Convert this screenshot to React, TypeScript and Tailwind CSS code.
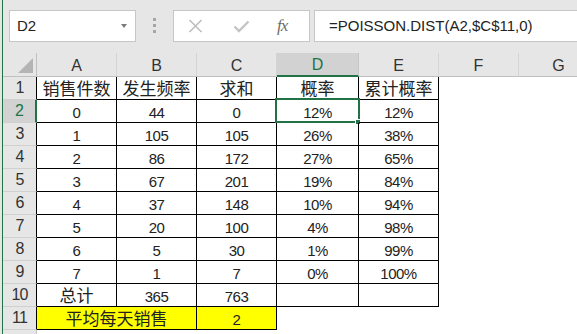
import React from 'react';

const GREEN = '#217346';

const cols = ['A', 'B', 'C', 'D', 'E', 'F', 'G'];

const rows: string[][] = [
  ['销售件数', '发生频率', '求和', '概率', '累计概率'],
  ['0', '44', '0', '12%', '12%'],
  ['1', '105', '105', '26%', '38%'],
  ['2', '86', '172', '27%', '65%'],
  ['3', '67', '201', '19%', '84%'],
  ['4', '37', '148', '10%', '94%'],
  ['5', '20', '100', '4%', '98%'],
  ['6', '5', '30', '1%', '99%'],
  ['7', '1', '7', '0%', '100%'],
  ['总计', '365', '763', '', ''],
];

const isCJK = (s: string) => /[\u4e00-\u9fff]/.test(s);

const CellText: React.FC<{ value: string }> = ({ value }) =>
  isCJK(value) ? (
    <span className="text-[17px] leading-[20px] pt-[3px]">{value}</span>
  ) : (
    <span className="text-[15px] leading-[18px] tracking-[-0.5px] pt-[4px]">{value}</span>
  );

const RowHeader: React.FC<{ n?: number; active?: boolean; dark?: boolean }> = ({ n, active, dark }) => (
  <div
    className={`flex items-center justify-center border-b border-[#d0d0d0] text-[16px] tracking-[-0.8px] ${
      active
        ? 'bg-[#d2d2d2] border-r-2 border-r-[#217346] text-[#217346]'
        : `bg-[#e6e6e6] border-r ${dark ? 'border-r-black' : 'border-r-[#c6c6c6]'} text-[#333]`
    }`}
  >
    {n}
  </div>
);

export default function App() {
  return (
    <div className="w-[577px] h-[334px] overflow-hidden bg-[#e6e6e6] pl-[2px] font-['Liberation_Sans','Noto_Sans_CJK_SC',sans-serif] text-[#222]">
      <div className="h-full border-l border-[#217346] flex flex-col">
        {/* formula bar */}
        <div className="h-[53px] shrink-0 flex items-start pt-[10px] bg-[#e6e6e6]">
          <div className="ml-[6px] w-[127px] h-[32px] bg-white border border-[#c6c6c6] flex items-center pl-[7px] pr-[8px] justify-between">
            <span className="text-[15px]">D2</span>
            <span className="w-0 h-0 border-l-[3.5px] border-r-[3.5px] border-t-[4px] border-l-transparent border-r-transparent border-t-[#7a7a7a]" />
          </div>
          <div className="ml-[17px] mt-[8px] flex flex-col gap-[3px]">
            <span className="w-[3px] h-[3px] bg-[#a6a6a6]" />
            <span className="w-[3px] h-[3px] bg-[#a6a6a6]" />
            <span className="w-[3px] h-[3px] bg-[#a6a6a6]" />
          </div>
          <div className="ml-[17px] w-[137px] h-[32px] bg-white border border-[#c6c6c6] flex items-center pl-[14px]">
            <svg width="15" height="14" viewBox="0 0 15 14">
              <path d="M1.5 1 L13.5 13 M13.5 1 L1.5 13" stroke="#bdbdbd" strokeWidth="1.6" fill="none" />
            </svg>
            <svg className="ml-[30px]" width="17" height="13" viewBox="0 0 17 13">
              <path d="M1.5 6.5 L6 11 L15.5 1.5" stroke="#c4c4c4" strokeWidth="2.4" fill="none" />
            </svg>
            <span className="ml-[27px] font-['Liberation_Serif',serif] italic text-[17px] text-[#6d6d6d] tracking-[-1px]">
              fx
            </span>
          </div>
          <div className="ml-[4px] flex-1 h-[32px] bg-white border border-r-0 border-[#c6c6c6] flex items-center pl-[14px]">
            <span className="text-[15px] text-[#222]">=POISSON.DIST(A2,$C$11,0)</span>
          </div>
        </div>

        {/* sheet grid */}
        <div className="flex-1 bg-white grid grid-cols-[34px_80px_80px_80px_82px_80px_80px_80px] grid-rows-[24px_repeat(12,23px)]">
          {/* column headers */}
          <div className="bg-[#e6e6e6] border-r border-b border-[#bfbfbf] relative">
            <svg className="absolute left-[15px] top-[5px]" width="16" height="16" viewBox="0 0 16 16">
              <path d="M15 0 L15 15 L0 15 Z" fill="#b4b4b4" />
            </svg>
          </div>
          {cols.map((c) =>
            c === 'D' ? (
              <div
                key={c}
                className="bg-[#d2d2d2] border-r border-r-[#c6c6c6] border-b-2 border-b-[#217346] flex items-center justify-center text-[16px] text-[#217346] pt-[2px]"
              >
                {c}
              </div>
            ) : (
              <div
                key={c}
                className="bg-[#e6e6e6] border-r border-r-[#d4d4d4] border-b border-b-[#bfbfbf] flex items-center justify-center text-[16px] text-[#333] pt-[2px]"
              >
                {c}
              </div>
            ),
          )}

          {/* rows 1-10 */}
          {rows.map((r, i) => (
            <React.Fragment key={i}>
              <RowHeader n={i + 1} active={i === 1} dark />
              {r.map((v, j) => (
                <div
                  key={j}
                  className="relative border-r border-b border-black flex items-center justify-center"
                >
                  <CellText value={v} />
                  {i === 1 && j === 3 && (
                    <>
                      <span className="absolute -left-[2px] -top-[2px] w-[85px] h-[25px] border-2" style={{ borderColor: GREEN }} />
                      <span className="absolute left-[78px] top-[19px] w-[6px] h-[6px] bg-[#217346] border border-white" />
                    </>
                  )}
                </div>
              ))}
              <div />
              <div />
            </React.Fragment>
          ))}

          {/* row 11 */}
          <RowHeader n={11} dark />
          <div className="col-span-2 bg-[#ffff00] border-r border-b border-black flex items-center justify-center">
            <CellText value="平均每天销售" />
          </div>
          <div className="bg-[#ffff00] border-r border-b border-black flex items-center justify-center">
            <CellText value="2" />
          </div>
          <div />
          <div />
          <div />
          <div />

          {/* row 12, only its top edge shows */}
          <RowHeader />
          <div />
          <div />
          <div />
          <div />
          <div />
          <div />
          <div />
        </div>
      </div>
    </div>
  );
}
